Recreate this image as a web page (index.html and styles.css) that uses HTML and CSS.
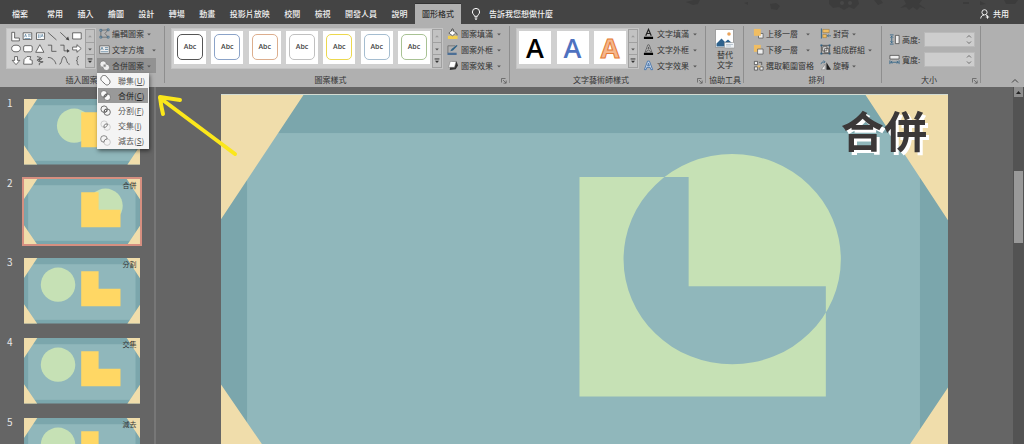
FILE: index.html
```html
<!DOCTYPE html>
<html lang="zh-Hant">
<head>
<meta charset="utf-8">
<title>圖形格式</title>
<link rel="stylesheet" href="styles.css">
</head>
<body>
<svg class="defs" aria-hidden="true">
  <symbol id="slide-base" viewBox="0 0 726 411">
    <rect width="726" height="411" fill="#7ba6ac"/>
    <rect x="26" y="39" width="672" height="348" fill="#90b7bb"/>
    <path d="M0 0H83L0 125zM643 0H726V126zM0 290L83 411H0zM726 293V411H647z" fill="#f0ddab"/>
  </symbol>
  <symbol id="ell" viewBox="0 0 726 411"><path d="M358 83H467V192H604V302H358z" fill="#ffd764"/></symbol>
  <symbol id="down" viewBox="0 0 5 5"><path d="M1 2H4L2.5 3.7z" fill="#555"/></symbol>
  <symbol id="up" viewBox="0 0 5 5"><path d="M1 3.5H4L2.5 1.8z" fill="#999"/></symbol>
  <symbol id="more" viewBox="0 0 5 5"><path d="M.5 .8H4.5" stroke="#333" stroke-width=".8"/><path d="M.8 2.2H4.2L2.5 4.2z" fill="#333"/></symbol>
  <symbol id="launch" viewBox="0 0 6 6"><path d="M.5 4.5V.5H4.5M2 2L5 5M5.2 2.5V5.2H2.5" fill="none" stroke="#555" stroke-width=".7"/></symbol>
</svg>

<div class="app">
  <header class="tabs">
    <svg class="tabs-art" viewBox="0 0 340 24" fill="#3c3c3c" aria-hidden="true">
      <path d="M2 2l8-2 6 0-2 4-5 1zM60 3l4-1v3zM86 4l6-1 4 3-3 4-6-1zM145 0h29l1 4-5 5-5-2-5 3-5-3-6 1-4-4zM190 0h7l2 3-5 2zM216 8l6-4-2-4h18l-3 4 7 5-6-2-3 3-4-3-4 3-3-3zM279 2h6v2h-6zM296 1l6 3-6 1zM320 0h14l-3 4h-9z"/>
      <circle cx="158" cy="3" r="2" fill="#474747"/><circle cx="166" cy="3" r="2" fill="#474747"/>
    </svg>
    <button class="tab tab-file">檔案</button>
    <nav class="tab-list">
      <button class="tab">常用</button><button class="tab">插入</button><button class="tab">繪圖</button><button class="tab">設計</button><button class="tab">轉場</button><button class="tab">動畫</button><button class="tab">投影片放映</button><button class="tab">校閱</button><button class="tab">檢視</button><button class="tab">開發人員</button><button class="tab">說明</button><button class="tab active">圖形格式</button>
    </nav>
    <button class="tell">
      <svg width="10" height="12" viewBox="0 0 10 12" fill="none" stroke="#fff"><path d="M3.5 8.3C3.4 6.7 1.4 6 1.4 4A3.6 3.6 0 0 1 8.6 4C8.6 6 6.6 6.7 6.5 8.3zM3.7 10H6.3M4.2 11.3H5.8"/></svg>
      告訴我您想做什麼
    </button>
    <button class="share">
      <svg width="10" height="10" viewBox="0 0 10 10" fill="none" stroke="#fff" stroke-width=".9"><circle cx="4.5" cy="3.3" r="2.6"/><path d="M.7 9.5C.9 7.3 2.2 6.1 4 6M6 6L7 6.7M7.5 6.3V9.7M5.8 8H9.2"/></svg>
      共用
    </button>
  </header>

  <section class="ribbon">
    <div class="group g-insert">
      <div class="group-body">
        <div class="gallery">
          <svg class="shapes" viewBox="0 0 78 41" fill="#fff" stroke="#444" stroke-width=".8">
            <path d="M3 3.500h3v6h5v3H3z"/>
            <path d="M15 4h9v7h-9zM29 4h8.500v7h-8.500z"/><path d="M16.500 8.500l1-3 1 3M20 6h3M20 7.500h3M16.500 10h6M34 8.500l1-3 1 3M31 5.500v4M32.700 5.500v4" fill="none" stroke="#2d6185" stroke-width=".6"/>
            <path d="M41 3.500l9 8M54 3.500l8 7.500" fill="none"/><path d="M63.500 12l-1.200-4-2.600 2.800z" fill="#444" stroke="none"/>
            <path d="M67 4h9v6.500h-9z"/>
            <ellipse cx="7.500" cy="20.500" rx="4.600" ry="3.500"/><rect x="15.500" y="17.500" width="9" height="6.500" rx="1.500"/><path d="M32.500 16.500l4.300 8h-8.600z"/>
            <path d="M41 17h4v6.500h5M54 17h4v6h4" fill="none"/><path d="M64 23l-3-2v4z" fill="#444" stroke="none"/>
            <path d="M67 19h4.500v-2.500l4.500 4-4.500 4V22H67z"/>
            <path d="M6 29h3v4h2.500l-4 4.500-4-4.500H6zM16 32l3-3h4l-1 3 2.500 1v4H15.500z"/>
            <path d="M29.500 29l4 1-4 3 5.500-2-4 3 5 .5-4 1.500v2M41 30c4-.5 7.500 3 8.500 7M53 37c3 0 2-8 5-8s2 8 6 8M73.500 29c-2 0-1.600 1-1.600 2.500s0 1.500-1 1.700c1 .3 1 .7 1 2s-.4 2.500 1.600 2.500" fill="none"/>
          </svg>
          <div class="scroller"><button aria-label="上"><svg><use href="#up"/></svg></button><button aria-label="下"><svg><use href="#down"/></svg></button><button aria-label="更多"><svg><use href="#more"/></svg></button></div>
        </div>
        <div class="cmds">
          <button class="cmd"><svg class="ic" viewBox="0 0 12 12" fill="none" stroke="#555"><path d="M2 2.500L10 2 6.500 6 10 10H2z" stroke-width=".7"/><path d="M1 1.500h2v2H1zM9 1h2v2H9zM1 9h2v2H1zM9 9h2v2H9z" fill="#b0b0b0" stroke="#2d6185" stroke-width=".7"/></svg>編輯圖案<svg class="car"><use href="#down"/></svg></button>
          <button class="cmd wide"><svg class="ic" viewBox="0 0 12 12"><path d="M.8 2h10.400v8.500H.8z" fill="#eee" stroke="#555" stroke-width=".8"/><path d="M2 6.500l1.300-3 1.300 3M6.500 4H10M6.500 6H10M2 8.500h8" fill="none" stroke="#2d6185" stroke-width=".7"/></svg>文字方塊<svg class="car"><use href="#down"/></svg></button>
          <div class="drop">
            <button class="cmd open"><svg class="ic" viewBox="0 0 12 12" fill="#eee" stroke="#666" stroke-width=".6"><circle cx="4.500" cy="4.500" r="3.500"/><circle cx="8" cy="8" r="3.500"/><path d="M4.700 4.700h3v3h-3z" fill="#888" stroke="#eee"/></svg>合併圖案<svg class="car"><use href="#down"/></svg></button>
            <div class="menu">
              <button><svg class="ic" viewBox="0 0 12 12" fill="#fafafa" stroke="#555" stroke-width=".9"><path d="M1.500 2.200C3-.2 6-.2 7.500 2.200L10.300 5.500C12.500 8 9 12.500 6 10.300L2.500 7C.5 5.500.5 3.700 1.500 2.200z"/></svg><span>聯集(<u>U</u>)</span></button>
              <button class="on"><svg class="ic" viewBox="0 0 12 12" fill="#fafafa" stroke="#555" stroke-width=".7"><path d="M7.800 4.300A3.600 3.600 0 1 0 4.300 7.800C4 6 6 4 7.800 4.300z"/><path d="M4.300 7.800A3.600 3.600 0 1 0 7.800 4.300C8 6 6 8 4.300 7.800z"/><path d="M4.500 7.500C4.500 5.500 5.500 4.500 7.500 4.500 7.500 6.500 6.500 7.500 4.500 7.500z" fill="#999"/></svg><span>合併(<u>C</u>)</span></button>
              <button><svg class="ic" viewBox="0 0 12 12" fill="none" stroke="#555" stroke-width=".9"><circle cx="4.500" cy="4.500" r="3.500"/><circle cx="7.800" cy="7.800" r="3.500"/><path d="M6.200 4.500L8 6.300 6.200 8 4.400 6.300z"/></svg><span>分割(<u>F</u>)</span></button>
              <button><svg class="ic" viewBox="0 0 12 12" fill="none" stroke="#bbb" stroke-width=".7"><circle cx="4.500" cy="4.500" r="3.500"/><circle cx="7.800" cy="7.800" r="3.500"/><path d="M4.300 8C4 5.500 5.500 4 8 4.300 8.200 6.500 6.500 8.200 4.300 8z" fill="#fff" stroke="#444"/></svg><span>交集(<u>I</u>)</span></button>
              <button><svg class="ic" viewBox="0 0 12 12" fill="none" stroke="#bbb" stroke-width=".8"><circle cx="7.800" cy="7.800" r="3.500"/><path d="M7.900 4.300A3.600 3.600 0 1 0 4.300 7.900C4.200 6 6 4.200 7.900 4.300z" stroke="#666"/></svg><span>減去(<u>S</u>)</span></button>
            </div>
          </div>
        </div>
      </div>
      <div class="group-foot"><span>插入圖案</span></div>
    </div>

    <div class="group g-style">
      <div class="group-body">
        <div class="gallery">
          <div class="cards">
            <button class="card k1"><span>Abc</span></button><button class="card k2"><span>Abc</span></button><button class="card k3"><span>Abc</span></button><button class="card k4"><span>Abc</span></button><button class="card k5"><span>Abc</span></button><button class="card k6"><span>Abc</span></button><button class="card k7"><span>Abc</span></button>
          </div>
          <div class="scroller"><button aria-label="上"><svg><use href="#up"/></svg></button><button aria-label="下"><svg><use href="#down"/></svg></button><button aria-label="更多"><svg><use href="#more"/></svg></button></div>
        </div>
        <div class="cmds">
          <button class="cmd"><svg class="ic" viewBox="0 0 12 12"><path d="M1 8.500h10.500V12H1z" fill="#f3cf4e"/><path d="M2 5.500L6 2l3.500 3.500L6 8.500z" fill="#fff" stroke="#444" stroke-width=".8"/><path d="M5 3.500V1.500q1-1.500 2 0V4M9.500 5q2 1 1.500 3" fill="none" stroke="#444" stroke-width=".8"/></svg>圖案填滿<svg class="car"><use href="#down"/></svg></button>
          <button class="cmd"><svg class="ic" viewBox="0 0 12 12"><path d="M9 2H1v8" fill="none" stroke="#666" stroke-width=".8"/><path d="M.5 9.500h10V12H.5z" fill="#4c6f96"/><path d="M3.500 8L5 5.500 10.500 1l1 1L6.500 7z" fill="#2d6185"/></svg>圖案外框<svg class="car"><use href="#down"/></svg></button>
          <button class="cmd"><svg class="ic" viewBox="0 0 12 12"><path d="M4 3.500L6 1.500h4.500L12 6 9.500 10 3 11z" fill="#333"/><path d="M3.500 1.500h6.500l-1.800 6.500H1.700z" fill="#fff" stroke="#777" stroke-width=".6"/></svg>圖案效果<svg class="car"><use href="#down"/></svg></button>
        </div>
      </div>
      <div class="group-foot"><span>圖案樣式</span><button aria-label="圖案樣式設定"><svg><use href="#launch"/></svg></button></div>
    </div>

    <div class="group g-wordart">
      <div class="group-body">
        <div class="gallery">
          <div class="cards"><button class="card art a1">A</button><button class="card art a2">A</button><button class="card art a3">A</button></div>
          <div class="scroller"><button aria-label="上"><svg><use href="#up"/></svg></button><button aria-label="下"><svg><use href="#down"/></svg></button><button aria-label="更多"><svg><use href="#more"/></svg></button></div>
        </div>
        <div class="cmds">
          <button class="cmd"><svg class="ic" viewBox="0 0 12 12"><path d="M1 9.500h10V12H1z" fill="#000"/><path d="M3 8.500L6 1.500l3 7M4.200 6h3.600" fill="none" stroke="#222" stroke-width="1.300"/></svg>文字填滿<svg class="car"><use href="#down"/></svg></button>
          <button class="cmd"><svg class="ic" viewBox="0 0 12 12"><path d="M1 9.500h10V12H1z" fill="#000"/><path d="M2.500 8.500L5.300 1h1.400l2.800 7.500H8L7.200 6.500H4.800L4 8.500zM5.200 5.200h1.600L6 3z" fill="#ddd" stroke="#333" stroke-width=".7"/></svg>文字外框<svg class="car"><use href="#down"/></svg></button>
          <button class="cmd"><svg class="ic" viewBox="0 0 12 12"><path d="M1.500 10.500L5 1.200h2l3.500 9.300H8.600L7.700 8H4.300l-.9 2.500zM5 6.300h2L6 3.500z" fill="#c9d8ee" stroke="#3d6ea8" stroke-width=".9"/></svg>文字效果<svg class="car"><use href="#down"/></svg></button>
        </div>
      </div>
      <div class="group-foot"><span>文字藝術師樣式</span><button aria-label="文字藝術師樣式設定"><svg><use href="#launch"/></svg></button></div>
    </div>

    <div class="group g-alt">
      <div class="group-body">
        <button class="big"><svg width="20" height="20" viewBox="0 0 20 20"><path d="M.5.5h18v18H.500z" fill="#fff" stroke="#888" stroke-width=".7"/><circle cx="14" cy="5" r="1.800" fill="#e9a35b"/><path d="M1.500 17.500v-3l5-5 3.500 3.500 3-2.500 4 3.500v3.500z" fill="#2f628c"/><path d="M9.500 13.500h10v5.500h-10z" fill="#eef2f5" stroke="#999" stroke-width=".6"/><path d="M11 15.500h7M11 17h5" stroke="#9ab" stroke-width=".6"/></svg><span>替代</span><span>文字</span></button>
      </div>
      <div class="group-foot"><span>協助工具</span></div>
    </div>

    <div class="group g-arrange">
      <div class="group-body">
        <div class="cmds">
          <button class="cmd wide"><svg class="ic" viewBox="0 0 12 12"><path d="M6 6h5v5H6z" fill="#eee" stroke="#555" stroke-width=".8"/><path d="M1 1h7.500v7.500H1z" fill="#f0bd62"/></svg>上移一層<svg class="car"><use href="#down"/></svg></button>
          <button class="cmd wide"><svg class="ic" viewBox="0 0 12 12"><path d="M1 1h7.500v7.500H1z" fill="#f0bd62"/><path d="M5 5.500h6V11H5z" fill="#eee" stroke="#555" stroke-width=".8"/></svg>下移一層<svg class="car"><use href="#down"/></svg></button>
          <button class="cmd"><svg class="ic" viewBox="0 0 12 12" fill="#eee" stroke="#444" stroke-width=".8"><path d="M1.500 1.500h3.500v3.500H1.500zM1.500 7.500h3.500V11H1.500zM7.500 7.500H11V11H7.500z"/><path d="M6.500 2.500h3v3" fill="none"/><path d="M5 6h3v2H5z" fill="#f0bd62" stroke="none"/></svg>選取範圍窗格</button>
        </div>
        <div class="cmds">
          <button class="cmd"><svg class="ic" viewBox="0 0 12 12"><path d="M1.500.500V11.500" stroke="#2d6185"/><path d="M3 1.500h7v3.500H3zM3 7h4v3.500H3z" fill="#f0bd62" stroke="#8b6a2e" stroke-width=".5"/><path d="M12 8.500H8M9.500 7L8 8.500 9.500 10" fill="none" stroke="#2d6185" stroke-width=".8"/></svg>對齊<svg class="car"><use href="#down"/></svg></button>
          <button class="cmd"><svg class="ic" viewBox="0 0 12 12" fill="#eee" stroke="#444" stroke-width=".8"><path d="M1.500 1.500h9v9h-9z" fill="none"/><path d="M3 3h4.500v4.500H3zM5 5h4.500v4.500H5z"/><path d="M.5.5h2v2h-2zM9.500.5h2v2h-2zM.5 9.500h2v2h-2zM9.500 9.500h2v2h-2z" fill="#2d6185" stroke="none"/></svg>組成群組<svg class="car"><use href="#down"/></svg></button>
          <button class="cmd"><svg class="ic" viewBox="0 0 12 12"><path d="M7 2.500V10.500H12z" fill="#222"/><path d="M5.500 4.500v6H1.500z" fill="#eee" stroke="#777" stroke-width=".6"/><path d="M1 4.500Q1.500 1.500 5 2M4 .5L5.500 2 4 3.500" fill="none" stroke="#2d6185" stroke-width=".8"/></svg>旋轉<svg class="car"><use href="#down"/></svg></button>
        </div>
      </div>
      <div class="group-foot"><span>排列</span></div>
    </div>

    <div class="group g-size">
      <div class="group-body">
        <div class="field">
          <svg class="ic" viewBox="0 0 12 12"><path d="M7 1.500h4v9H7z" fill="#eee" stroke="#444" stroke-width=".8"/><path d="M1 1h4M1 11h4M3 2.500v7M1.500 4L3 2.500 4.500 4M1.500 8L3 9.500 4.500 8" fill="none" stroke="#2d6185" stroke-width=".9"/></svg>
          <label for="h">高度:</label>
          <div class="spin"><input id="h" type="text"><svg width="6" height="11" viewBox="0 0 6 11" fill="none" stroke="#555" stroke-width=".8"><path d="M1 3.500L3 1.500 5 3.500M1 7.500L3 9.500 5 7.500"/></svg></div>
        </div>
        <div class="field">
          <svg class="ic" viewBox="0 0 12 12"><path d="M1 1.500h10v4H1z" fill="#eee" stroke="#444" stroke-width=".8"/><path d="M1 7v4M11 7v4M2 9h8M3.500 7.500L2 9l1.500 1.500M8.500 7.500L10 9l-1.500 1.500" fill="none" stroke="#2d6185" stroke-width=".9"/></svg>
          <label for="w">寬度:</label>
          <div class="spin"><input id="w" type="text"><svg width="6" height="11" viewBox="0 0 6 11" fill="none" stroke="#555" stroke-width=".8"><path d="M1 3.500L3 1.500 5 3.500M1 7.500L3 9.500 5 7.500"/></svg></div>
        </div>
      </div>
      <div class="group-foot"><span>大小</span><button aria-label="大小設定"><svg><use href="#launch"/></svg></button></div>
    </div>
    <button class="collapse" aria-label="摺疊功能區"><svg width="8" height="6" viewBox="0 0 8 6" fill="none" stroke="#444"><path d="M1 4.500L4 1.500 7 4.500"/></svg></button>
  </section>

  <main class="work">
    <aside class="thumbs">
      <button class="thumb"><span>1</span><svg viewBox="0 0 726 411"><use href="#slide-base"/><ellipse cx="314" cy="167" rx="108" ry="107" fill="#c6e1b5"/><use href="#ell"/></svg></button>
      <button class="thumb selected"><span>2</span><svg viewBox="0 0 726 411"><use href="#slide-base"/><ellipse cx="510" cy="167" rx="108" ry="107" fill="#c6e1b5"/><use href="#ell"/><text x="616" y="57">合併</text></svg></button>
      <button class="thumb"><span>3</span><svg viewBox="0 0 726 411"><use href="#slide-base"/><ellipse cx="213" cy="167" rx="108" ry="107" fill="#c6e1b5"/><use href="#ell"/><text x="616" y="57">分割</text></svg></button>
      <button class="thumb"><span>4</span><svg viewBox="0 0 726 411"><use href="#slide-base"/><ellipse cx="213" cy="167" rx="108" ry="107" fill="#c6e1b5"/><use href="#ell"/><text x="616" y="57">交集</text></svg></button>
      <button class="thumb"><span>5</span><svg viewBox="0 0 726 411"><use href="#slide-base"/><ellipse cx="213" cy="167" rx="108" ry="107" fill="#c6e1b5"/><use href="#ell"/><text x="616" y="57">減去</text></svg></button>
    </aside>
    <section class="stage">
      <svg class="slide" viewBox="0 0 726 411">
        <use href="#slide-base"/>
        <path d="M0 .5H726" stroke="#d3dcd3"/>
        <path fill="#c6e1b5" fill-rule="evenodd" d="M358 83H467V192H604V302H358zM402 165A108.500 105 0 0 1 619 165A108.500 105 0 0 1 402 165z"/>
        <text class="slide-title" x="619" y="54">合併</text>
      </svg>
    </section>
    <div class="scrollbar"><button aria-label="向上捲動"><svg width="7" height="5" viewBox="0 0 7 5"><path d="M1 4L3.500 1 6 4z" fill="#222"/></svg></button><div class="track"><div class="handle"></div></div></div>
  </main>

  <svg class="pointer" width="86" height="66" viewBox="0 0 86 66" fill="none" stroke="#fbe71b" stroke-width="4" stroke-linecap="round" stroke-linejoin="round" aria-hidden="true"><path d="M81 61L6 5M26 7L6 4Q7 13 9 21"/></svg>
</div>
</body>
</html>
```

FILE: styles.css
```css
* { box-sizing: border-box; }
body {
  margin: 0;
  font: 8px/12px "Noto Sans CJK TC", sans-serif;
  color: #333;
  background: #656565;
}
button {
  font: inherit;
  color: inherit;
  border: 0;
  padding: 0;
  margin: 0;
  background: none;
  white-space: nowrap;
}
svg { display: block; flex: none; }
.defs { position: absolute; width: 0; height: 0; }
.app {
  position: relative;
  display: flex;
  flex-direction: column;
  height: 100vh;
  overflow: hidden;
}

/* Tab bar */
.tabs {
  position: relative;
  display: flex;
  align-items: stretch;
  height: 24px;
  padding-top: 4px;
  background: #444;
  color: #f2f2f2;
}
.tabs-art { position: absolute; top: 0; right: 0; width: 340px; height: 24px; }
.tab { padding: 0 7px; font-weight: 500; }
.tab-file { padding: 0 12px; }
.tab-list { display: flex; justify-content: space-between; width: 421px; }
.tab.active { background: #b0b0b0; color: #333; box-shadow: 0 -1px #333; }
.tell, .share { display: flex; align-items: center; gap: 8px; font-weight: 500; }
.tell { margin-left: 10px; }
.share { position: relative; margin-left: auto; margin-right: 15px; gap: 3px; }

/* Ribbon */
.ribbon {
  display: flex;
  height: 63px;
  padding-top: 2px;
  background: #b0b0b0;
}
.group { position: relative; display: flex; flex-direction: column; }
.group::after {
  content: "";
  position: absolute;
  top: 0;
  right: 0;
  bottom: 4px;
  width: 1px;
  background: #8e8e8e;
}
.group-body { display: flex; height: 48px; }
.group-foot { display: flex; align-items: center; height: 12px; }
.group-foot span { flex: 1; text-align: center; }
.group-foot button { padding: 2px 3px 0; }
.group-foot svg { width: 6px; height: 6px; }
.g-insert { width: 165px; padding-left: 6px; }
.g-insert .group-foot { padding-right: 8px; }
.g-style { width: 345px; padding-left: 6px; }
.g-style .group-foot { padding-left: 0; }
.g-wordart { width: 196px; padding-left: 6px; }
.g-alt { width: 38px; }
.g-arrange { width: 138px; padding-left: 7px; }
.g-size { width: 99px; padding-left: 7px; }
.g-style .group-foot span, .g-wordart .group-foot span { padding-right: 8px; }

.gallery {
  display: flex;
  height: 41px;
  margin-top: 2px;
  background: #d0d0d0;
  border: 1px solid #c4c4c4;
}
.shapes { width: 78px; height: 39px; }
.g-style .gallery { width: 272px; }
.g-wordart .gallery { width: 123px; }
.cards { flex: 1; display: flex; justify-content: space-between; padding: 2px; }
.scroller { display: flex; flex-direction: column; width: 10px; background: #c2c2c2; }
.scroller button {
  flex: 1;
  display: flex;
  align-items: center;
  justify-content: center;
  border: 1px solid #a0a0a0;
}
.scroller button + button { border-top: 0; }
.scroller svg { width: 6px; height: 6px; }
.card { display: flex; width: 32px; height: 33px; padding: 3px; background: #fff; }
.card span {
  flex: 1;
  height: 26px;
  border: 1px solid;
  border-radius: 5px;
  color: #444;
  font: 600 7px/23px "Open Sans", sans-serif;
  text-align: center;
}
.k1 span { border-color: #555; }
.k2 span { border-color: #8ba3c8; }
.k3 span { border-color: #dcae8e; }
.k4 span { border-color: #c0c0c0; }
.k5 span { border-color: #ecd84e; }
.k6 span { border-color: #a5bdd0; }
.k7 span { border-color: #a8c294; }
.art {
  align-items: center;
  justify-content: center;
  font: 600 27px/27px "Open Sans", sans-serif;
}
.a1 { color: #000; }
.a2 { color: #4f72bf; }
.a3 { color: #f5b78c; font-weight: 700; -webkit-text-stroke: 1px #e57b36; }

.cmds { display: flex; flex-direction: column; gap: 1px; margin-left: 2px; }
.cmd { display: flex; align-items: center; gap: 3px; height: 15px; padding: 0 3px 0 2px; }
.ic { width: 11px; height: 11px; }
.car { width: 6px; height: 6px; }
.cmd.wide .car { margin-left: 5px; }
.cmd.open { background: #929292; width: 59px; }
.g-insert .cmds { margin-left: 1px; }
.g-insert .cmd, .g-arrange .cmd { gap: 2px; }
.g-arrange .cmds { margin-left: 0; }
.g-arrange .cmds + .cmds { margin-left: 1px; }
.big {
  display: flex;
  flex-direction: column;
  align-items: center;
  width: 100%;
  padding-top: 3px;
  line-height: 10px;
}
.big span:first-of-type { margin-top: 1px; }
.g-size .group-body { flex-direction: column; gap: 5px; padding-top: 6px; }
.field { display: flex; align-items: center; gap: 2px; height: 15px; }
.field label { width: 20px; }
.spin {
  flex: 1;
  display: flex;
  align-items: center;
  height: 15px;
  margin-right: 6px;
  padding-right: 2px;
  background: #cdcdcd;
  border: 1px solid #bababa;
}
.spin input { flex: 1; min-width: 0; width: 0; height: 11px; border: 0; padding: 0 2px; background: none; font: inherit; }
.collapse { margin-left: auto; align-self: flex-end; padding: 0 5px 3px; }

/* Merge-shapes menu */
.drop { position: relative; }
.menu {
  position: absolute;
  z-index: 2;
  top: 15px;
  left: 0;
  width: 52px;
  padding: 0 1px 1px;
  background: #f4f4f4;
  box-shadow: 1px 2px 4px rgba(0, 0, 0, .5);
}
.menu button { display: flex; align-items: center; gap: 7px; width: 100%; height: 15px; padding: 0 2px; color: #555; }
.menu .on { background: #999; color: #222; }

/* Workspace */
.work { flex: 1; display: flex; min-height: 0; }
.thumbs {
  display: flex;
  flex-direction: column;
  gap: 14px;
  width: 156px;
  padding: 12px 0 0 7px;
  overflow: hidden;
  border-right: 2px solid #777;
}
.thumb { display: flex; align-items: flex-start; }
.thumb span { width: 17px; color: #e8e8e8; font-size: 10px; line-height: 7px; text-align: left; }
.thumb svg { width: 116px; height: auto; aspect-ratio: 726 / 411; }
.thumb text { font-size: 44px; fill: #333; }
.selected svg { outline: 2px solid #d68f80; }
.stage { flex: 1; padding: 7px 65px 0; overflow: hidden; }
.slide { width: 100%; height: auto; }
.slide-title { font-size: 43px; font-weight: 700; fill: #3b3838; filter: drop-shadow(3px 3px 0 #fff); }
.scrollbar { display: flex; flex-direction: column; width: 11px; background: #535353; padding: 0 1px; }
.scrollbar button {
  display: flex;
  align-items: center;
  justify-content: center;
  height: 10px;
  background: #8e8e8e;
}
.track { flex: 1; padding-top: 74px; }
.handle { height: 72px; background: #999; }

/* Hand-drawn arrow over the window */
.pointer { position: absolute; left: 154px; top: 93px; }
```
